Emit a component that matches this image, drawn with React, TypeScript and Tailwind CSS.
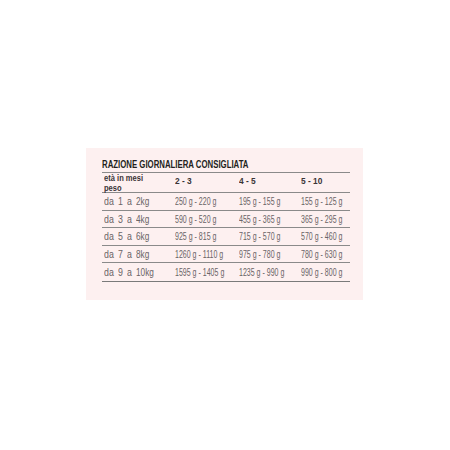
import React from "react";

const rows = [
  ["1", "2", "250 g - 220 g", "195 g - 155 g", "155 g - 125 g"],
  ["3", "4", "590 g - 520 g", "455 g - 365 g", "365 g - 295 g"],
  ["5", "6", "925 g - 815 g", "715 g - 570 g", "570 g - 460 g"],
  ["7", "8", "1260 g - 1110 g", "975 g - 780 g", "780 g - 630 g"],
  ["9", "10", "1595 g - 1405 g", "1235 g - 990 g", "990 g - 800 g"],
];

function C({ children }: { children: React.ReactNode }) {
  return (
    <div className="pl-[2px] whitespace-nowrap">
      <span className="inline-block origin-left scale-x-[0.64]">{children}</span>
    </div>
  );
}

export default function App() {
  return (
    <div className="w-[450px] h-[450px] bg-white flex items-start" style={{ fontFamily: '"Liberation Sans", Arial, sans-serif' }}>
      <div className="ml-[86px] mt-[148px] w-[277px] h-[152px] bg-[#fdf0f0] pl-[16px] pr-[13px] pt-[10px]">
        <div className="text-[11px] leading-[12px] font-bold text-[#231f20] h-[14px] whitespace-nowrap">
          <span className="inline-block origin-left scale-x-[0.71]">RAZIONE GIORNALIERA CONSIGLIATA</span>
        </div>
        <div className="border-t border-[#8a8a8a]">
          <div className="grid grid-cols-[71px_64px_62px_51px] h-[20px] border-b border-[#8a8a8a] text-[9px] font-bold text-[#3a3436] leading-[9.5px] whitespace-nowrap">
            <div className="pl-[2px] pt-[1px] flex flex-col">
              <span className="inline-block origin-left scale-x-[0.84]">età in mesi</span>
              <span className="inline-block origin-left scale-x-[0.84]">peso</span>
            </div>
            <div className="pl-[2px] pt-[3px] text-[9.5px]"><span className="inline-block origin-left scale-x-[0.88]">2 - 3</span></div>
            <div className="pl-[2px] pt-[3px] text-[9.5px]"><span className="inline-block origin-left scale-x-[0.88]">4 - 5</span></div>
            <div className="pl-[2px] pt-[3px] text-[9.5px]"><span className="inline-block origin-left scale-x-[0.88]">5 - 10</span></div>
          </div>
          {rows.map((r, i) => (
            <div
              key={i}
              className={
                i === 4
                  ? "grid grid-cols-[71px_64px_62px_51px] h-[18.5px] border-b-[1.5px] border-[#7a7a7a] text-[11px] leading-[12px] text-[#6a6466] items-center"
                  : "grid grid-cols-[71px_64px_62px_51px] h-[17.5px] border-b border-[#8a8a8a] text-[11px] leading-[12px] text-[#6a6466] items-center"
              }
            >
              <div className="pl-[2px] flex whitespace-nowrap">
                <span className="w-[14px] inline-block origin-left scale-x-[0.8]">da</span>
                <span className="w-[9px] inline-block origin-left scale-x-[0.8]">{r[0]}</span>
                <span className="w-[9px] inline-block origin-left scale-x-[0.8]">a</span>
                <span className="inline-block origin-left scale-x-[0.75]">{r[1]}kg</span>
              </div>
              <C>{r[2]}</C>
              <C>{r[3]}</C>
              <C>{r[4]}</C>
            </div>
          ))}
        </div>
      </div>
    </div>
  );
}
